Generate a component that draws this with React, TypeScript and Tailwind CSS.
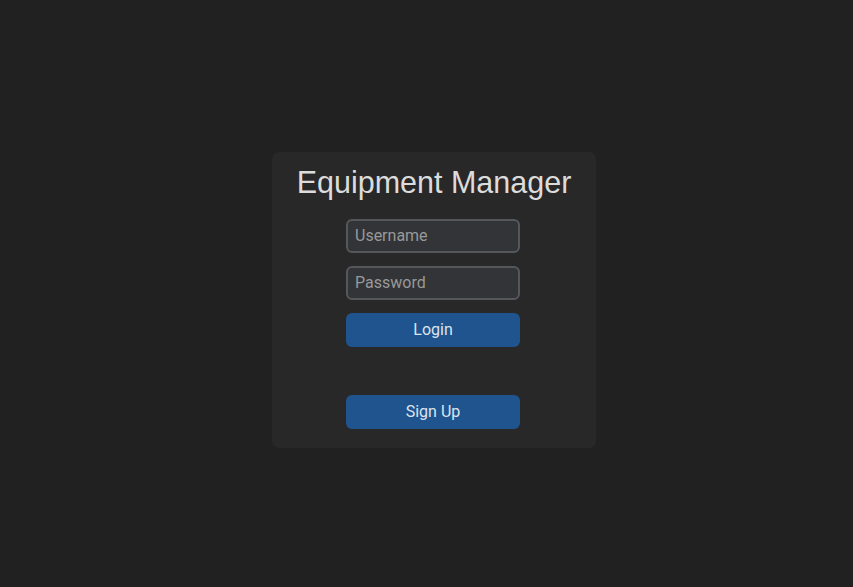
import React from 'react';

export default function App() {
  return (
    <div className="min-h-screen w-full bg-[#212121] flex items-center justify-center pl-[15px] pt-[13px]">
      <div className="w-[324px] h-[296px] bg-[#282828] rounded-[7px] flex flex-col items-center pt-[12px]">
        <h1 className="font-['Liberation_Sans',Arial,sans-serif] text-[30.5px] leading-[36px] text-[#dcdcdc]">
          Equipment Manager
        </h1>
        <div className="mt-[19px] mr-[2px] w-[174px] flex flex-col font-['Roboto',sans-serif]">
          <input
            type="text"
            placeholder="Username"
            className="h-[34px] w-full rounded-[6px] border-2 border-[#55585b] bg-[#323437] px-[7px] pb-[2px] text-[16px] text-[#ddd] placeholder:text-[#999] outline-none"
          />
          <input
            type="password"
            placeholder="Password"
            className="mt-[13px] h-[34px] w-full rounded-[6px] border-2 border-[#55585b] bg-[#323437] px-[7px] pb-[2px] text-[16px] text-[#ddd] placeholder:text-[#999] outline-none"
          />
          <button className="mt-[13px] h-[34px] w-full rounded-[6px] bg-[#1f548f] text-[16px] text-[#dde4ee]">
            Login
          </button>
          <button className="mt-[48px] h-[34px] w-full rounded-[6px] bg-[#1f548f] text-[16px] text-[#dde4ee]">
            Sign Up
          </button>
        </div>
      </div>
    </div>
  );
}
